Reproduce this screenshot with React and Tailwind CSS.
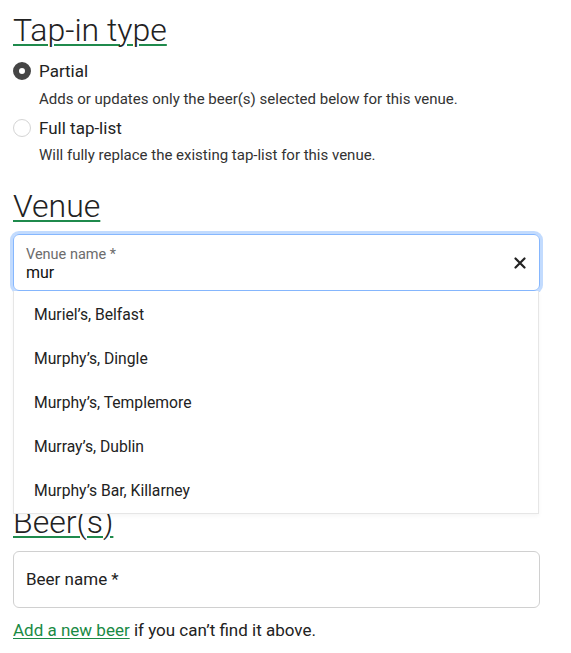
import React from "react";

function Radio({ checked }) {
  return checked ? (
    <span className="box-border inline-block h-[18px] w-[18px] shrink-0 rounded-full border-[6px] border-[#454545] bg-white" />
  ) : (
    <span className="box-border inline-block h-[18px] w-[18px] shrink-0 rounded-full border border-[#d4d4d4] bg-white" />
  );
}

function Heading({ children, className = "" }) {
  return (
    <h2
      className={
        "text-[32px] font-light leading-[38px] text-[#222] underline decoration-[#1f8a4c] decoration-2 underline-offset-[3px] " +
        className
      }
    >
      {children}
    </h2>
  );
}

const venues = [
  "Muriel’s, Belfast",
  "Murphy’s, Dingle",
  "Murphy’s, Templemore",
  "Murray’s, Dublin",
  "Murphy’s Bar, Killarney",
];

export default function App() {
  return (
    <div className="min-h-[653px] bg-white px-[13px] font-['Roboto',sans-serif] text-[#222]">
      <Heading className="pt-[11px]">Tap-in type</Heading>

      <div className="mt-[11px] flex items-center gap-[8px]">
        <Radio checked />
        <span className="text-[17px] leading-[22px]">Partial</span>
      </div>
      <div className="mt-[7px] pl-[26px] text-[15px] leading-[20px] text-[#333]">
        Adds or updates only the beer(s) selected below for this venue.
      </div>
      <div className="mt-[8px] flex items-center gap-[8px]">
        <Radio />
        <span className="text-[17px] leading-[22px]">Full tap-list</span>
      </div>
      <div className="mt-[6px] pl-[26px] text-[15px] leading-[20px] text-[#333]">
        Will fully replace the existing tap-list for this venue.
      </div>

      <Heading className="mt-[22px]">Venue</Heading>

      <div className="relative mt-[9px] w-[527px]">
        <div className="box-border flex h-[57px] items-center rounded-[6px] border border-[#86b7fe] pl-[12px] pr-[12px] shadow-[0_0_0_3px_rgba(13,110,253,0.25)]">
          <div className="flex flex-1 flex-col pt-[4px]">
            <span className="text-[14.5px] leading-[17px] text-[#6c6c6c]">Venue name *</span>
            <span className="text-[16px] leading-[20px] text-[#111]">mur</span>
          </div>
          <svg width="12" height="12" viewBox="0 0 12 12" className="mr-[1px]">
            <path d="M1.5 1.5 L10.5 10.5 M10.5 1.5 L1.5 10.5" stroke="#222" strokeWidth="2.2" strokeLinecap="round" />
          </svg>
        </div>
        <div className="absolute left-0 top-[57px] z-10 w-[526px] border border-t-0 border-[#e6e6e6] bg-white pt-[2px] shadow-[0_2px_4px_rgba(0,0,0,0.04)]">
          {venues.map((v) => (
            <div key={v} className="flex h-[44px] items-center pl-[20px] text-[15.7px] text-[#222]">
              {v}
            </div>
          ))}
        </div>
      </div>

      <div className="h-[212px]" />

      <Heading>Beer(s)</Heading>

      <div className="mt-[10px] box-border flex h-[57px] w-[527px] items-center rounded-[6px] border border-[#d0d0d0] pl-[12px]">
        <span className="text-[17px] text-[#222]">Beer name *</span>
      </div>

      <p className="mt-[10px] text-[17px] leading-[24px] text-[#222]">
        <a className="text-[#1a8a45] underline decoration-1 underline-offset-2">Add a new beer</a> if you can’t find it above.
      </p>
    </div>
  );
}
